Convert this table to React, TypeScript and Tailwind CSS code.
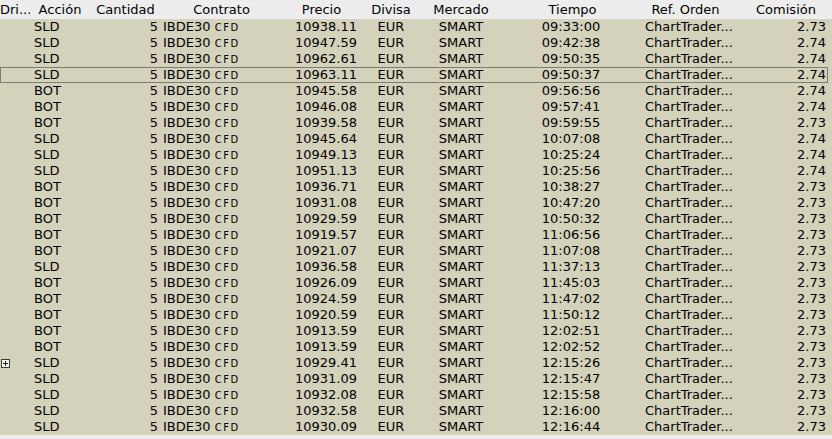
const fills = [
  ["SLD", "10938.11", "09:33:00", "2.73"],
  ["SLD", "10947.59", "09:42:38", "2.74"],
  ["SLD", "10962.61", "09:50:35", "2.74"],
  ["SLD", "10963.11", "09:50:37", "2.74"],
  ["BOT", "10945.58", "09:56:56", "2.74"],
  ["BOT", "10946.08", "09:57:41", "2.74"],
  ["BOT", "10939.58", "09:59:55", "2.73"],
  ["SLD", "10945.64", "10:07:08", "2.74"],
  ["SLD", "10949.13", "10:25:24", "2.74"],
  ["SLD", "10951.13", "10:25:56", "2.74"],
  ["BOT", "10936.71", "10:38:27", "2.73"],
  ["BOT", "10931.08", "10:47:20", "2.73"],
  ["BOT", "10929.59", "10:50:32", "2.73"],
  ["BOT", "10919.57", "11:06:56", "2.73"],
  ["BOT", "10921.07", "11:07:08", "2.73"],
  ["SLD", "10936.58", "11:37:13", "2.73"],
  ["BOT", "10926.09", "11:45:03", "2.73"],
  ["BOT", "10924.59", "11:47:02", "2.73"],
  ["BOT", "10920.59", "11:50:12", "2.73"],
  ["BOT", "10913.59", "12:02:51", "2.73"],
  ["BOT", "10913.59", "12:02:52", "2.73"],
  ["SLD", "10929.41", "12:15:26", "2.73"],
  ["SLD", "10931.09", "12:15:47", "2.73"],
  ["SLD", "10932.08", "12:15:58", "2.73"],
  ["SLD", "10932.58", "12:16:00", "2.73"],
  ["SLD", "10930.09", "12:16:44", "2.73"],
];

const cols = "grid grid-cols-[30px_60px_71px_121px_79px_60px_80px_143px_96px_92px]";

function PlusBox() {
  return (
    <span className="ml-[1px] inline-flex h-[9px] w-[9px] items-center justify-center border border-[#3a3a3a] bg-[#f4f4ef]">
      <svg width="7" height="7" viewBox="0 0 7 7">
        <path d="M1 3.5H6M3.5 1V6" stroke="#1a1a1a" strokeWidth="1" />
      </svg>
    </span>
  );
}

export default function App() {
  return (
    <div className="h-[439px] w-[832px] overflow-hidden bg-[#ededed] font-['DejaVu_Sans',sans-serif] text-[13px] text-black">
      {/* column headers */}
      <div className={`${cols} h-[19px] items-center leading-[19px] whitespace-nowrap`}>
        <div className="overflow-hidden">Dri...</div>
        <div className="text-center">Acción</div>
        <div className="text-center">Cantidad</div>
        <div className="text-center">Contrato</div>
        <div className="text-center">Precio</div>
        <div className="text-center">Divisa</div>
        <div className="text-center">Mercado</div>
        <div className="text-center">Tiempo</div>
        <div className="pr-[13px] text-center">Ref. Orden</div>
        <div className="text-center">Comisión</div>
      </div>

      {/* executions */}
      <div className="bg-[#d5d2bc]">
        {fills.map(([side, price, time, fee], i) => {
          const selected = i === 3;
          return (
            <div
              key={i}
              className={`${cols} h-[16px] items-center leading-[14px] whitespace-nowrap ${
                selected ? "w-[828px] shadow-[inset_0_0_0_1px_#7d7c72]" : ""
              }`}
            >
              <div className="flex items-center">{i === 21 && <PlusBox />}</div>
              <div className="pl-[4px]">{side}</div>
              <div className="pr-[3px] text-right">5</div>
              <div className="pl-[2px]">
                IBDE30 <span className="text-[10px] tracking-[1.5px]">CFD</span>
              </div>
              <div className="pr-[4px] text-right">{price}</div>
              <div className="text-center">EUR</div>
              <div className="text-center">SMART</div>
              <div className="pr-[3px] text-center">{time}</div>
              <div className="pl-[1px]">ChartTrader...</div>
              <div className="pr-[6px] text-right">{fee}</div>
            </div>
          );
        })}
      </div>
    </div>
  );
}
